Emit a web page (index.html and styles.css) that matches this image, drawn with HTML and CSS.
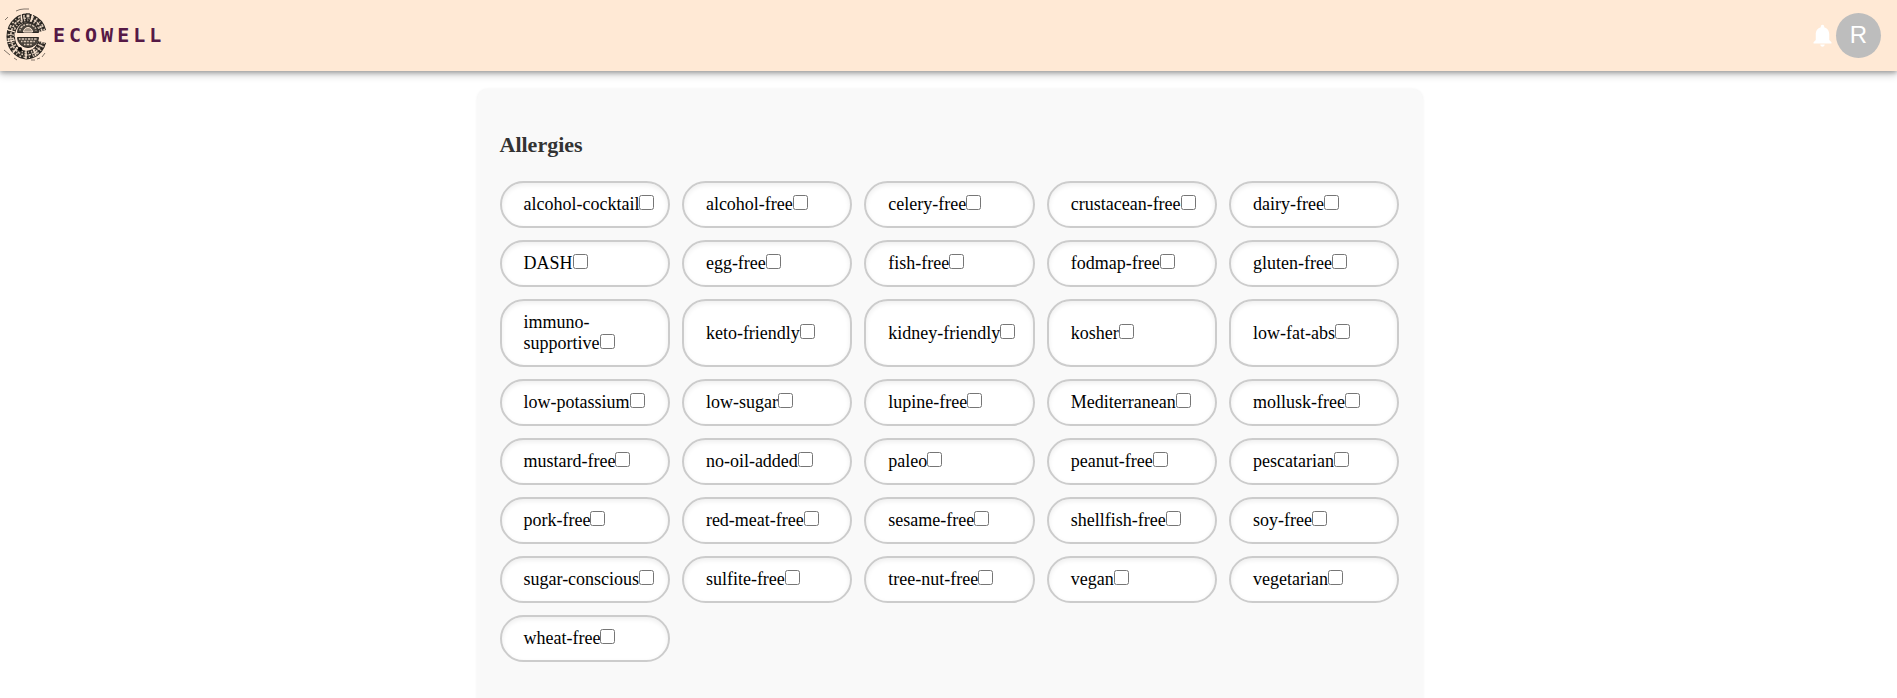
FILE: index.html
```html
<!DOCTYPE html>
<html lang="en">
<head>
<meta charset="utf-8">
<title>Ecowell</title>
<link rel="stylesheet" href="styles.css">
</head>
<body>
<header class="topbar">
  <a class="brand" href="#">
    <svg class="brand-logo" viewBox="0 0 48 56" aria-hidden="true">
      <g fill="none">
        <path d="M40 24A16 18.500 0 1 0 40 35" stroke="#2b2722" stroke-width="8.500"/>
        <path d="M40 24A16 18.500 0 1 0 40 35" stroke="#d8c6b5" stroke-width="6.500" stroke-dasharray="1.500 2 2.500 2 1 2.500"/>
        <path d="M40 24A16 18.500 0 1 0 40 35" stroke="#3a352f" stroke-width="3.500" stroke-dasharray="3 1.500 2 2"/>
        <path d="M40 24A16 18.500 0 1 0 40 35" stroke="#e6d3c1" stroke-width="1.500" stroke-dasharray="2.500 1.500 1.500 1.500 3 1"/>
        <path d="M19 6L20 14M31 6L29 14M4 22L13 25M4 35L13 33M11 46L15 40M24 52V43M34 49L31 42" stroke="#ffe9d5" stroke-width="1.200"/>
        <path d="M24 7H28V11H24Z" fill="#e6d3c1" stroke="#1d1a17"/>
        <path d="M15.500 25.500A10.500 10 0 0 1 36.500 25.500ZM15.500 30.500H36.500A10.500 10 0 0 1 15.500 30.500Z" fill="#4a443c" stroke="#2b2722"/>
        <path d="M14 30V26M12.500 28H46" stroke="#ffe9d5" stroke-width="3"/>
        <path d="M18 23.500A8 6 0 0 1 34 23.500M17 32H35M19 34.500H33M22 37.500H30" stroke="#dccab9" stroke-width="1.400" stroke-dasharray="1.500 1.200 2.500 1"/>
        <path d="M21.500 25A4.500 4.500 0 0 1 30.500 25Z" fill="#a89a8b" stroke="#ffe9d5"/>
        <circle cx="18" cy="42" r="2" fill="#000"/>
        <path d="M14 4Q18 2 22 2M22 2H27M3 13L6 10M2 43L8 48M12 51L15 53M29 53L33 53M35 52L38 51M40 50L43 46" stroke="#2b2722" stroke-width="0.600"/>
      </g>
    </svg>
    <span class="brand-name">ECOWELL</span>
  </a>
  <div class="actions">
    <button class="icon-button" type="button" aria-label="Notifications">
      <svg class="bell" viewBox="0 0 24 24" aria-hidden="true"><path fill="#fff" d="M12 22c1.100 0 2-.9 2-2h-4c0 1.100.89 2 2 2zm6-6v-5c0-3.070-1.640-5.640-4.500-6.320V4c0-.83-.67-1.500-1.500-1.500s-1.500.67-1.500 1.500v.68C7.630 5.360 6 7.920 6 11v5l-2 2v1h16v-1l-2-2z"/></svg>
    </button>
    <button class="avatar" type="button">R</button>
  </div>
</header>
<main class="page">
  <form class="card">
    <h2 class="card-title">Allergies</h2>
    <div class="options">
      <label class="option"><span>alcohol-cocktail<input type="checkbox"></span></label>
      <label class="option"><span>alcohol-free<input type="checkbox"></span></label>
      <label class="option"><span>celery-free<input type="checkbox"></span></label>
      <label class="option"><span>crustacean-free<input type="checkbox"></span></label>
      <label class="option"><span>dairy-free<input type="checkbox"></span></label>
      <label class="option"><span>DASH<input type="checkbox"></span></label>
      <label class="option"><span>egg-free<input type="checkbox"></span></label>
      <label class="option"><span>fish-free<input type="checkbox"></span></label>
      <label class="option"><span>fodmap-free<input type="checkbox"></span></label>
      <label class="option"><span>gluten-free<input type="checkbox"></span></label>
      <label class="option"><span>immuno-supportive<input type="checkbox"></span></label>
      <label class="option"><span>keto-friendly<input type="checkbox"></span></label>
      <label class="option"><span>kidney-friendly<input type="checkbox"></span></label>
      <label class="option"><span>kosher<input type="checkbox"></span></label>
      <label class="option"><span>low-fat-abs<input type="checkbox"></span></label>
      <label class="option"><span>low-potassium<input type="checkbox"></span></label>
      <label class="option"><span>low-sugar<input type="checkbox"></span></label>
      <label class="option"><span>lupine-free<input type="checkbox"></span></label>
      <label class="option"><span>Mediterranean<input type="checkbox"></span></label>
      <label class="option"><span>mollusk-free<input type="checkbox"></span></label>
      <label class="option"><span>mustard-free<input type="checkbox"></span></label>
      <label class="option"><span>no-oil-added<input type="checkbox"></span></label>
      <label class="option"><span>paleo<input type="checkbox"></span></label>
      <label class="option"><span>peanut-free<input type="checkbox"></span></label>
      <label class="option"><span>pescatarian<input type="checkbox"></span></label>
      <label class="option"><span>pork-free<input type="checkbox"></span></label>
      <label class="option"><span>red-meat-free<input type="checkbox"></span></label>
      <label class="option"><span>sesame-free<input type="checkbox"></span></label>
      <label class="option"><span>shellfish-free<input type="checkbox"></span></label>
      <label class="option"><span>soy-free<input type="checkbox"></span></label>
      <label class="option"><span>sugar-conscious<input type="checkbox"></span></label>
      <label class="option"><span>sulfite-free<input type="checkbox"></span></label>
      <label class="option"><span>tree-nut-free<input type="checkbox"></span></label>
      <label class="option"><span>vegan<input type="checkbox"></span></label>
      <label class="option"><span>vegetarian<input type="checkbox"></span></label>
      <label class="option"><span>wheat-free<input type="checkbox"></span></label>
    </div>
  </form>
</main>
</body>
</html>
```
FILE: styles.css
```css
* {
  box-sizing: border-box;
}

body {
  margin: 0;
  background: #fff;
  color: #000;
  font: 18px/21px "Liberation Serif", "Times New Roman", serif;
}

.topbar {
  display: flex;
  align-items: center;
  justify-content: space-between;
  padding: 7px 16px 8px 2px;
  background: #ffe9d5;
  box-shadow: 0 2px 4px rgba(0, 0, 0, 0.25), 0 4px 8px rgba(0, 0, 0, 0.18);
}

.brand {
  display: flex;
  align-items: center;
  gap: 3px;
  color: #561946;
  text-decoration: none;
}

.brand-logo {
  width: 48px;
  height: 56px;
}

.brand-name {
  font: bold 20px/28px "DejaVu Sans Mono", monospace;
  letter-spacing: 4px;
}

.actions {
  display: flex;
  align-items: center;
}

.icon-button,
.avatar {
  padding: 0;
  border: 0;
  background: none;
  cursor: pointer;
}

.bell {
  display: block;
  width: 27px;
  height: 27px;
}

.avatar {
  width: 45px;
  height: 45px;
  border-radius: 50%;
  background: #bdbdbd;
  color: #fff;
  font: 24px/42px "Liberation Sans", Arial, sans-serif;
}

.page {
  padding: 18px 16px 0 18px;
}

.card {
  max-width: 946px;
  min-height: 640px;
  margin: 0 auto;
  padding: 44px 23px;
  border-radius: 10px;
  background: #f9f9f9;
  box-shadow: 0 0 3px rgba(0, 0, 0, 0.06);
}

.card-title {
  margin: 0 0 24px;
  color: #333;
  font-size: 22px;
  line-height: 24px;
}

.options {
  display: grid;
  grid-template-columns: repeat(5, 1fr);
  gap: 12px;
}

.option {
  display: flex;
  align-items: center;
  min-width: 0;
  padding: 11px 12px 11px 22px;
  border: 2px solid #ccc;
  border-radius: 24px;
  background: #fff;
  box-shadow: inset 0 2px 5px rgba(0, 0, 0, 0.07);
  cursor: pointer;
}

.option input {
  width: 15px;
  height: 15px;
  margin: 0;
}
```
